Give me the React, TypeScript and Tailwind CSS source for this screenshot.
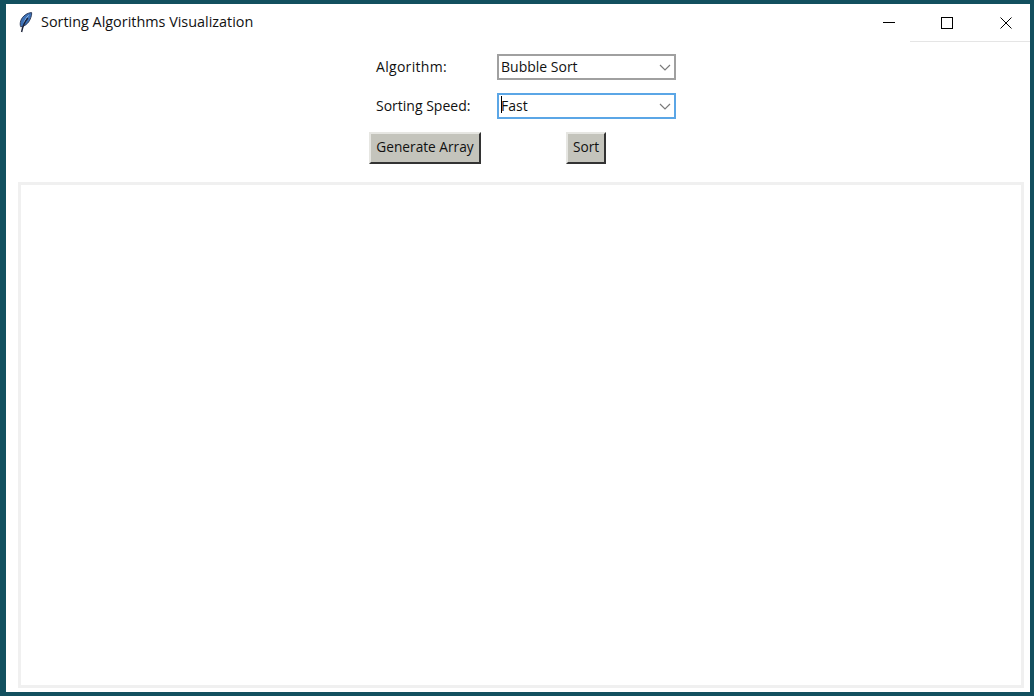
const FONT = "font-['Open_Sans','Noto_Sans',sans-serif]";

function Feather() {
  return (
    <svg width="14" height="21" viewBox="0 0 14 21" fill="none">
      <path d="M12.6 0.6C8.4 0.8 3.6 3.8 1.8 8.6C1 11 1 13.2 1.8 14.8C5.6 14.4 9.4 11.4 11.2 7.2C12.2 4.8 12.9 2.4 12.6 0.6Z" fill="#3d72b8" stroke="#26324f" strokeWidth="0.9" />
      <path d="M9.6 3.4C7.6 5.4 6 7.8 5 10.4" stroke="#9cc0e8" strokeWidth="1" />
      <path d="M8.8 6C6 9.5 3.8 13.5 2.6 20" stroke="#1b2238" strokeWidth="1.4" />
    </svg>
  );
}

function WindowButtons() {
  return (
    <div className="flex h-[37px] items-center pr-[18px]">
      <svg className="mr-[46px]" width="12" height="12" viewBox="0 0 12 12"><path d="M0 5.5H12" stroke="#000" /></svg>
      <svg className="mr-[47px]" width="12" height="12" viewBox="0 0 12 12"><rect x="0.5" y="0.5" width="11" height="11" fill="none" stroke="#000" /></svg>
      <svg width="12" height="12" viewBox="0 0 12 12"><path d="M0.5 0.5L11.5 11.5M11.5 0.5L0.5 11.5" stroke="#000" /></svg>
    </div>
  );
}

function Combo({ value, focused }: { value: string; focused?: boolean }) {
  return (
    <div
      className={`flex h-[26px] w-[179px] items-center justify-between text-[14px] text-[#111] ${
        focused ? 'border-2 border-[#5ba6e6] pr-[3px] pl-[2px]' : 'border-2 border-[#a0a0a0] pr-[3px] pl-[2px]'
      }`}
    >
      <span className="relative pb-[2px]">
        {focused && <span className="absolute top-[1px] left-0 h-[17px] w-px bg-black" />}
        {value}
      </span>
      <svg width="12" height="7" viewBox="0 0 12 7" fill="none">
        <path d="M1 1L6 6L11 1" stroke="#7a7a7a" strokeWidth="1.2" />
      </svg>
    </div>
  );
}

function TkButton({ label, width }: { label: string; width: string }) {
  return (
    <button className={`h-8 border-2 border-t-[#e6e6e2] border-r-[#333] border-b-[#333] border-l-[#e6e6e2] bg-[#c4c4bc] pb-[1px] text-[13.7px] text-[#111] ${width}`}>
      {label}
    </button>
  );
}

export default function App() {
  return (
    <div className={`h-[696px] w-[1034px] overflow-hidden bg-[#12505f] pt-1 pr-1 pb-1 pl-1.5 ${FONT}`}>
      <div className="flex h-[688px] flex-col bg-white">
        <div className="flex h-[37px] items-center justify-between">
          <div className="flex items-center pl-[13px] text-[14.4px] text-[#111]">
            <Feather />
            <span className="ml-[8px] pb-[2px]">Sorting Algorithms Visualization</span>
          </div>
          <WindowButtons />
        </div>
        <div className="ml-auto h-px w-[120px] bg-[#e5e5e5]" />

        <div className="mt-3 ml-[363px] grid w-[307px] grid-cols-[128px_179px] items-center gap-y-[13px] text-[14px] text-[#111]">
          <span className="pb-[2px] pl-[7px] tracking-[0.3px]">Algorithm:</span>
          <Combo value="Bubble Sort" />
          <span className="pb-[2px] pl-[7px]">Sorting Speed:</span>
          <Combo value="Fast" focused />
          <div className="flex">
            <TkButton label="Generate Array" width="w-[112px]" />
          </div>
          <div className="flex justify-center pr-[1px]">
            <TkButton label="Sort" width="w-[40px]" />
          </div>
        </div>

        <div className="mt-[18px] mr-[6px] ml-[12px] h-[506px] border-[3px] border-[#f0f0f0] bg-white" />
      </div>
    </div>
  );
}
